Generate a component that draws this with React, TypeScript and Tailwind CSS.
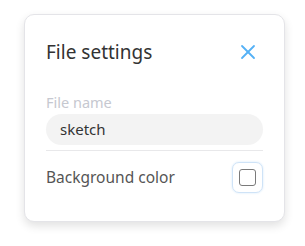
import { X } from "lucide-react";

const App = () => {
  return (
    <div className="h-screen w-full bg-white pl-[24px] pt-[14px] font-['Noto_Sans',sans-serif]">
      <div className="flex h-[208px] w-[261px] flex-col rounded-[10px] border border-[#e4e4e8] bg-white px-[21px] pt-[24px] shadow-[0_4px_10px_rgba(0,0,0,0.12)]">
        <div className="flex items-center justify-between">
          <h2 className="text-[19px] leading-[26px] font-normal text-[#333]">File settings</h2>
          <button className="mr-[3px] text-[#55b1f6]">
            <X size={24} strokeWidth={1.8} />
          </button>
        </div>
        <label className="mt-[28px] text-[14.5px] leading-[18px] text-[#c6c8d0]">File name</label>
        <div className="mt-[3px] flex h-[31px] items-center rounded-full bg-[#f3f3f3] px-[14px] text-[15px] text-[#333]">
          sketch
        </div>
        <div className="mt-[5px] h-px bg-[#e8e8ea]" />
        <div className="mt-[11px] flex items-center justify-between">
          <span className="text-[15.5px] text-[#555]">Background color</span>
          <div className="flex h-[31px] w-[31px] items-center justify-center rounded-[7px] border border-[#cfe3f7] shadow-[0_0_2px_rgba(85,170,240,0.3)]">
            <div className="h-[17px] w-[17px] rounded-[3px] border border-[#7a7a7a] bg-white" />
          </div>
        </div>
      </div>
    </div>
  );
};

export default App;
